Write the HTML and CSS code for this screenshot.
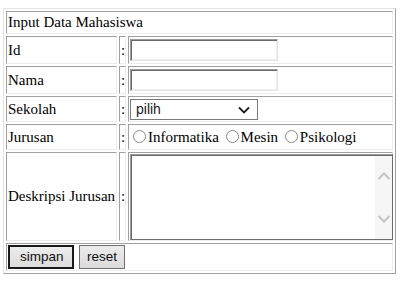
FILE: index.html
```html
<!DOCTYPE html>
<html>
<head>
<meta charset="utf-8">
<link rel="stylesheet" href="styles.css">
</head>
<body>
<table class="form-table">
  <colgroup><col class="col-label"><col class="col-colon"><col class="col-field"></colgroup>
  <tr class="row-head"><td colspan="3" class="cell">Input Data Mahasiswa</td></tr>
  <tr class="row-input">
    <td class="cell label">Id</td><td class="cell colon">:</td>
    <td class="cell field"><span class="text-input"></span></td>
  </tr>
  <tr class="row-input">
    <td class="cell label">Nama</td><td class="cell colon">:</td>
    <td class="cell field"><span class="text-input"></span></td>
  </tr>
  <tr class="row-select">
    <td class="cell label">Sekolah</td><td class="cell colon">:</td>
    <td class="cell field">
      <span class="select">pilih
        <svg class="chev" width="12" height="8" viewBox="0 0 12 8"><path d="M1 1.5 L6 6.5 L11 1.5" fill="none" stroke="#1e1e1e" stroke-width="1.8"/></svg>
      </span>
    </td>
  </tr>
  <tr class="row-radio">
    <td class="cell label">Jurusan</td><td class="cell colon">:</td>
    <td class="cell field radios">
      <span class="radio"></span>Informatika
      <span class="radio"></span>Mesin
      <span class="radio"></span>Psikologi
    </td>
  </tr>
  <tr class="row-area">
    <td class="cell label">Deskripsi Jurusan</td><td class="cell colon">:</td>
    <td class="cell field">
      <span class="textarea">
        <span class="scroll">
          <svg width="14" height="10" viewBox="0 0 14 10"><path d="M1.5 8 L7 2.5 L12.5 8" fill="none" stroke="#c4c4c4" stroke-width="2"/></svg>
          <svg width="14" height="10" viewBox="0 0 14 10"><path d="M1.5 2 L7 7.5 L12.5 2" fill="none" stroke="#c4c4c4" stroke-width="2"/></svg>
        </span>
      </span>
    </td>
  </tr>
  <tr class="row-btn">
    <td colspan="3" class="cell buttons">
      <span class="btn btn-default">simpan</span><span class="btn">reset</span>
    </td>
  </tr>
</table>
</body>
</html>
```
FILE: styles.css
```css
html, body { background: #fff; }
body {
  margin: 8px 0 0 3px;
  font-family: "Liberation Serif", "Times New Roman", serif;
  font-size: 15px;
  color: #000;
}
.form-table {
  width: 393px;
  border-collapse: separate;
  border-spacing: 2px;
  border: 1px solid;
  border-color: #e3e3e3 #a0a0a0 #a0a0a0 #e3e3e3;
  table-layout: fixed;
}
.col-label { width: 111px; }
.col-colon { width: 7px; }
.cell {
  border: 1px solid;
  border-color: #a0a0a0 #ededed #ededed #a0a0a0;
  padding: 0 1px;
  box-sizing: border-box;
  vertical-align: middle;
}
.row-head .cell { height: 23px; }
.row-input .cell { height: 28px; }
.row-select .cell { height: 26px; }
.row-radio .cell { height: 26px; }
.row-area .cell { height: 89px; }
.row-btn .cell { height: 28px; }
.label { white-space: nowrap; }
.colon { padding: 0 0 0 1px; }
.field { padding-left: 1px; }
.text-input {
  display: block;
  width: 148px;
  height: 22px;
  box-sizing: border-box;
  border: 1px solid;
  border-color: #9c9c9c #e3e3e3 #e3e3e3 #9c9c9c;
  box-shadow: inset 1px 1px 0 #696969, inset -1px -1px 0 #f0f0f0;
  background: #fff;
}
.select {
  position: relative;
  display: block;
  width: 128px;
  height: 21px;
  box-sizing: border-box;
  border: 1px solid #7a7a7a;
  padding: 0 0 0 5px;
  font-family: "Liberation Sans", Arial, sans-serif;
  font-size: 14px;
  line-height: 19px;
  color: #222;
}
.chev { position: absolute; right: 7px; top: 6px; }
.radios { white-space: nowrap; }
.radio {
  display: inline-block;
  width: 13px;
  height: 13px;
  box-sizing: border-box;
  border: 1px solid #8a8a8a;
  border-radius: 50%;
  background: #fff;
  vertical-align: -1px;
  margin: 0 2px 0 3px;
}
.textarea {
  position: relative;
  display: block;
  width: 263px;
  height: 86px;
  box-sizing: border-box;
  border: 1px solid;
  border-color: #9c9c9c #6d6d6d #6d6d6d #9c9c9c;
  box-shadow: inset 1px 1px 0 #696969;
  background: #fff;
}
.scroll {
  position: absolute;
  right: 0;
  top: 1px;
  bottom: 0;
  width: 17px;
  background: #f6f6f6;
  display: flex;
  flex-direction: column;
  justify-content: space-between;
  align-items: center;
  padding: 15px 0 15px;
  box-sizing: border-box;
}
.scroll svg { display: block; }
.buttons { padding: 0 1px; }
.btn {
  display: inline-block;
  box-sizing: border-box;
  height: 24px;
  border: 1px solid #707070;
  background: linear-gradient(#ececec, #dcdcdc);
  font-family: "Liberation Sans", Arial, sans-serif;
  font-size: 13.5px;
  line-height: 22px;
  color: #111;
  padding: 0 7px;
  vertical-align: middle;
  margin-right: 5px;
}
.btn-default {
  border: 2px solid #1a1a1a;
  line-height: 20px;
  padding: 0 10px;
  width: 66px;
  text-align: center;
}
```
